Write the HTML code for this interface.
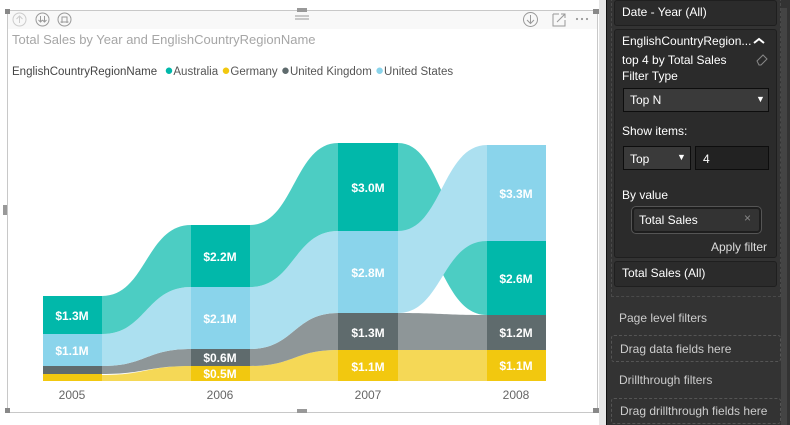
<!DOCTYPE html>
<html><head><meta charset="utf-8"><style>
*{margin:0;padding:0;box-sizing:border-box}
body{width:790px;height:425px;overflow:hidden;background:#fff;font-family:"Liberation Sans",sans-serif;position:relative}
.a{position:absolute}
.pt{color:#fff;font-size:12px;position:absolute;white-space:nowrap}
</style></head><body>
<div class="a" style="left:7px;top:10px;width:591px;height:403px;border:1px solid #c8c8c8"></div>
<div class="a" style="left:8px;top:11px;width:589px;height:18px;background:#f8f8f8"></div>
<div class="a" style="left:5px;top:9px;width:5px;height:5px;background:#888"></div>
<div class="a" style="left:5px;top:408px;width:5px;height:5px;background:#888"></div>
<div class="a" style="left:593px;top:9px;width:6px;height:5px;background:#888"></div>
<div class="a" style="left:593px;top:408px;width:6px;height:5px;background:#888"></div>
<div class="a" style="left:297px;top:409px;width:10px;height:4px;background:#999"></div>
<div class="a" style="left:297px;top:8px;width:10px;height:4px;background:#999"></div>
<div class="a" style="left:3px;top:205px;width:4px;height:10px;background:#999"></div>
<svg class="a" style="left:0;top:0" width="600" height="30">
<g fill="none" stroke="#aaa" stroke-width="1">
<circle cx="19.5" cy="19.5" r="6.5" stroke="#ccc"/><path d="M19.5 23V16M16.5 19l3-3 3 3" stroke="#ccc"/>
<circle cx="42.5" cy="19.5" r="6.5" stroke="#999"/><path d="M40.5 16v6M44.5 16v6M38.5 20l2 2 2-2M42.5 20l2 2 2-2" stroke="#999"/>
<circle cx="64.5" cy="19.5" r="6.5" stroke="#999"/><path d="M62 23v-6h5v6M60.5 22h8" stroke="#999"/>
<path d="M295 16h14M295 19h14" stroke="#999"/>
<circle cx="530.5" cy="19.5" r="7" stroke="#999"/><path d="M530.5 15v8M527 20l3.5 3.5 3.5-3.5" stroke="#999"/>
<path d="M553 14h6M553 14v12h12v-6M557 22l8-8M561 14h4v4" stroke="#999"/>
</g>
<g fill="#999"><circle cx="577" cy="19" r="1.1"/><circle cx="582" cy="19" r="1.1"/><circle cx="587" cy="19" r="1.1"/></g>
</svg>
<div class="a" style="left:12px;top:32px;font-size:13px;color:#a6a6a6">Total Sales by Year and EnglishCountryRegionName</div>
<div class="a" style="left:12px;top:62px;font-size:11.5px;color:#444;white-space:nowrap">EnglishCountryRegionName
<span style="color:#01B8AA;font-size:15px;margin-left:4px">●</span><span style="color:#555">Australia</span>
<span style="color:#F2C80F;font-size:15px">●</span><span style="color:#555">Germany</span>
<span style="color:#5F6B6D;font-size:15px">●</span><span style="color:#555">United Kingdom</span>
<span style="color:#8AD4EB;font-size:15px">●</span><span style="color:#555">United States</span></div>
<svg class="a" style="left:0;top:0" width="600" height="425">
<g opacity="0.7">
<path d="M102 375C146 375 146 366 191 366L191 381L102 381Z" fill="#F2C80F"/>
<path d="M102 366C146 366 146 349 191 349L191 366C146 366 146 374 102 374Z" fill="#5F6B6D"/>
<path d="M102 334C146 334 146 287 191 287L191 349C146 349 146 366 102 366Z" fill="#8AD4EB"/>
<path d="M102 296C146 296 146 225 191 225L191 287C146 287 146 334 102 334Z" fill="#01B8AA"/>
<path d="M250 366C294 366 294 350 338 350L338 381L250 381Z" fill="#F2C80F"/>
<path d="M250 349C294 349 294 313 338 313L338 350C294 350 294 366 250 366Z" fill="#5F6B6D"/>
<path d="M250 287C294 287 294 231 338 231L338 313C294 313 294 349 250 349Z" fill="#8AD4EB"/>
<path d="M250 225C294 225 294 143 338 143L338 231C294 231 294 287 250 287Z" fill="#01B8AA"/>
<path d="M398 350C442 350 442 350 487 350L487 381L398 381Z" fill="#F2C80F"/>
<path d="M398 313C442 313 442 315 487 315L487 350C442 350 442 350 398 350Z" fill="#5F6B6D"/>
<path d="M398 143C442 143 442 241 487 241L487 315C442 315 442 231 398 231Z" fill="#01B8AA"/>
<path d="M398 231C442 231 442 145 487 145L487 241C442 241 442 313 398 313Z" fill="#8AD4EB"/>
</g>
<g>
<rect x="43" y="374" width="59" height="7" fill="#F2C80F"/><rect x="43" y="366" width="59" height="8" fill="#5F6B6D"/><rect x="43" y="334" width="59" height="32" fill="#8AD4EB"/><rect x="43" y="296" width="59" height="38" fill="#01B8AA"/>
<rect x="191" y="366" width="59" height="15" fill="#F2C80F"/><rect x="191" y="349" width="59" height="17" fill="#5F6B6D"/><rect x="191" y="287" width="59" height="62" fill="#8AD4EB"/><rect x="191" y="225" width="59" height="62" fill="#01B8AA"/>
<rect x="338" y="350" width="60" height="31" fill="#F2C80F"/><rect x="338" y="313" width="60" height="37" fill="#5F6B6D"/><rect x="338" y="231" width="60" height="82" fill="#8AD4EB"/><rect x="338" y="143" width="60" height="88" fill="#01B8AA"/>
<rect x="487" y="350" width="59" height="31" fill="#F2C80F"/><rect x="487" y="315" width="59" height="35" fill="#5F6B6D"/><rect x="487" y="241" width="59" height="74" fill="#01B8AA"/><rect x="487" y="145" width="59" height="96" fill="#8AD4EB"/>
</g>
<g fill="#fff" font-family="Liberation Sans Narrow, Liberation Sans, sans-serif" font-size="12" font-weight="bold" text-anchor="middle">
<text x="72" y="320">$1.3M</text><text x="72" y="355">$1.1M</text>
<text x="220" y="261">$2.2M</text><text x="220" y="323">$2.1M</text><text x="220" y="362">$0.6M</text><text x="220" y="378">$0.5M</text>
<text x="368" y="192">$3.0M</text><text x="368" y="277">$2.8M</text><text x="368" y="337">$1.3M</text><text x="368" y="371">$1.1M</text>
<text x="516" y="198">$3.3M</text><text x="516" y="283">$2.6M</text><text x="516" y="337">$1.2M</text><text x="516" y="370">$1.1M</text>
</g>
<g fill="#666" font-family="Liberation Sans, sans-serif" font-size="12" text-anchor="middle">
<text x="72" y="399">2005</text><text x="220" y="399">2006</text><text x="368" y="399">2007</text><text x="516" y="399">2008</text>
</g>
</svg>
<div class="a" style="left:599px;top:0;width:7px;height:425px;background:#e6e6e6"></div>
<div class="a" style="left:606px;top:0;width:184px;height:425px;background:#333;border-left:1px solid #111"></div>
<div class="a" style="left:781px;top:8px;width:6px;height:417px;background:#444"></div>
<div class="a" style="left:611px;top:-2px;width:170px;height:299px;border:1px dashed #4a4a4a;border-top:none"></div>
<div class="a" style="left:614px;top:0;width:163px;height:26px;background:#2b2b2b;border:1px solid #1f1f1f;border-radius:3px"></div>
<div class="pt" style="left:622px;top:5px">Date - Year (All)</div>
<div class="a" style="left:614px;top:29px;width:163px;height:229px;background:#2b2b2b;border:1px solid #1f1f1f;border-radius:3px"></div>
<div class="pt" style="left:622px;top:34px">EnglishCountryRegion...</div>
<svg class="a" style="left:752px;top:36px" width="14" height="10"><path d="M2 7l5-4 5 4" stroke="#fff" stroke-width="2" fill="none"/></svg>
<div class="pt" style="left:622px;top:53px">top 4 by Total Sales</div>
<svg class="a" style="left:755px;top:53px" width="14" height="13"><path d="M2 8l6-6 4 4-6 6H4z" stroke="#888" fill="none"/></svg>
<div class="pt" style="left:622px;top:69px">Filter Type</div>
<div class="a" style="left:623px;top:88px;width:146px;height:24px;background:#3a3a3a;border:1px solid #0d0d0d"></div>
<div class="pt" style="left:630px;top:93px">Top N</div>
<div class="pt" style="left:756px;top:94px;font-size:9px">▼</div>
<div class="pt" style="left:622px;top:124px">Show items:</div>
<div class="a" style="left:623px;top:146px;width:68px;height:24px;background:#3a3a3a;border:1px solid #0d0d0d"></div>
<div class="pt" style="left:630px;top:152px">Top</div>
<div class="pt" style="left:677px;top:152px;font-size:9px">▼</div>
<div class="a" style="left:695px;top:146px;width:74px;height:24px;background:#222;border:1px solid #0d0d0d"></div>
<div class="pt" style="left:703px;top:152px">4</div>
<div class="pt" style="left:622px;top:188px">By value</div>
<div class="a" style="left:632px;top:207px;width:129px;height:26px;background:#333;border:2px solid #1e1e1e;border-radius:4px;box-shadow:0 0 0 1px #555"></div>
<div class="pt" style="left:639px;top:213px">Total Sales</div>
<div class="pt" style="left:744px;top:211px;color:#888">×</div>
<div class="pt" style="left:711px;top:240px;color:#ddd">Apply filter</div>
<div class="a" style="left:614px;top:261px;width:163px;height:26px;background:#2b2b2b;border:1px solid #1f1f1f;border-radius:3px"></div>
<div class="pt" style="left:622px;top:266px">Total Sales (All)</div>
<div class="pt" style="left:619px;top:311px;color:#ccc">Page level filters</div>
<div class="a" style="left:611px;top:335px;width:170px;height:27px;border:1px dashed #555;border-radius:3px"></div>
<div class="pt" style="left:620px;top:342px;color:#ccc">Drag data fields here</div>
<div class="pt" style="left:619px;top:373px;color:#ccc">Drillthrough filters</div>
<div class="a" style="left:611px;top:398px;width:170px;height:26px;border:1px dashed #555;border-radius:3px"></div>
<div class="pt" style="left:620px;top:404px;color:#ccc">Drag drillthrough fields here</div>
</body></html>
